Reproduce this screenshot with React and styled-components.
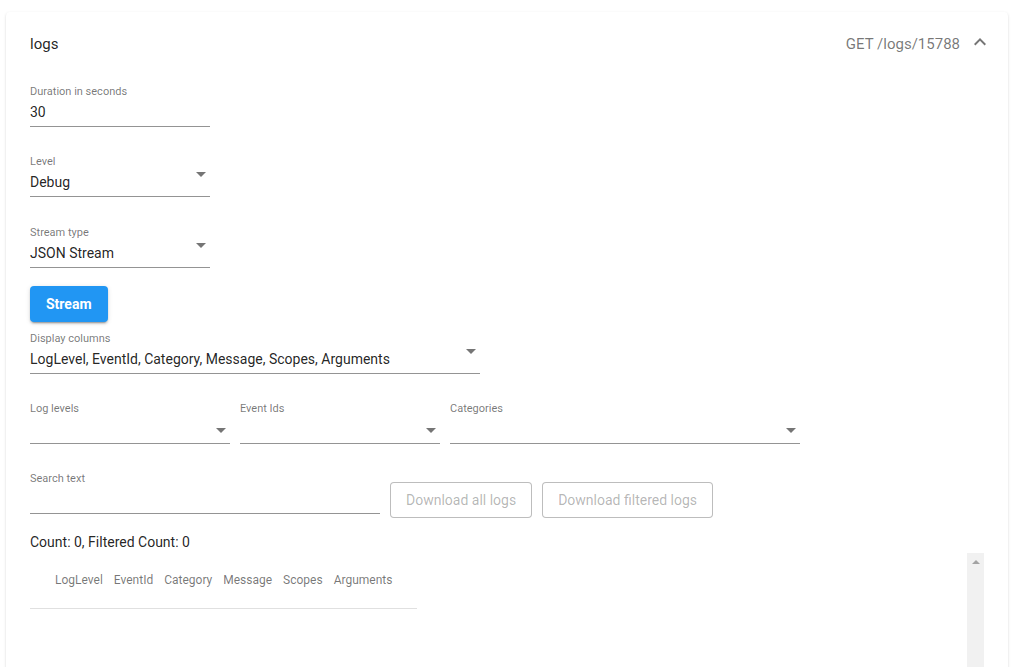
import React from "react";
import styled, { createGlobalStyle } from "styled-components";

const Global = createGlobalStyle`
  html, body { margin: 0; padding: 0; background: #fff; overflow: hidden; }
  body { font-family: Roboto, "Liberation Sans", Arial, sans-serif; color: rgba(0,0,0,0.87); }
  * { box-sizing: border-box; }
`;

const Page = styled.div`
  padding: 12px 5px 0 6px;
  height: 667px;
`;

const Card = styled.section`
  background: #fff;
  border-radius: 4px;
  box-shadow: 0 2px 1px -1px rgba(0,0,0,0.2), 0 1px 1px 0 rgba(0,0,0,0.14), 0 1px 3px 0 rgba(0,0,0,0.12);
  height: 700px;
`;

const Summary = styled.header`
  height: 64px;
  display: flex;
  align-items: center;
  padding: 0 16px 0 24px;
`;

const Title = styled.div`
  flex: 1;
  font-size: 15px;
  color: rgba(0,0,0,0.87);
`;

const Route = styled.div`
  font-size: 15px;
  color: rgba(0,0,0,0.54);
  margin-right: 8px;
`;

const ChevronBox = styled.svg`
  width: 24px;
  height: 24px;
  fill: rgba(0,0,0,0.54);
  margin-top: -4px;
`;

const Details = styled.div`
  padding: 8px 24px 0 24px;
  display: flex;
  flex-direction: column;
  align-items: flex-start;
`;

const Field = styled.div`
  position: relative;
  width: ${(p) => p.$w}px;
  margin-top: ${(p) => p.$mt ?? 0}px;
  display: flex;
  flex-direction: column;
`;

const Label = styled.div`
  font-size: 11px;
  line-height: 14px;
  padding-top: 1px;
  height: 15px;
  color: rgba(0,0,0,0.54);
  white-space: nowrap;
`;

const Value = styled.div`
  margin-top: 3px;
  font-size: 14px;
  line-height: 19px;
  height: 25px;
  padding-top: 1px;
  padding-bottom: 4px;
  border-bottom: 1px solid rgba(0,0,0,0.42);
  color: rgba(0,0,0,0.87);
  white-space: nowrap;
`;

const Arrow = styled.svg`
  position: absolute;
  right: 4px;
  bottom: ${(p) => p.$bottom}px;
  width: 10px;
  height: 5px;
  fill: rgba(0,0,0,0.54);
`;

const PrimaryButton = styled.button`
  margin-top: 18px;
  height: 36px;
  padding: 6px 16px;
  border: none;
  border-radius: 4px;
  background: #2196f3;
  color: #fff;
  font-family: inherit;
  font-size: 14px;
  font-weight: 700;
  line-height: 24px;
  box-shadow: 0 3px 1px -2px rgba(0,0,0,0.2), 0 2px 2px 0 rgba(0,0,0,0.14), 0 1px 5px 0 rgba(0,0,0,0.12);
`;

const Row = styled.div`
  display: flex;
  gap: 10px;
  margin-top: ${(p) => p.$mt ?? 27}px;
  align-items: flex-start;
`;

const OutlinedButton = styled.button`
  margin-top: 11px;
  height: 36px;
  padding: 5px 15px;
  border: 1px solid rgba(0,0,0,0.26);
  border-radius: 4px;
  background: #fff;
  color: rgba(0,0,0,0.3);
  font-family: inherit;
  font-size: 14px;
  line-height: 24px;
  white-space: nowrap;
`;

const Count = styled.div`
  margin-top: 15px;
  font-size: 14px;
  line-height: 19px;
  color: rgba(0,0,0,0.87);
`;

const Scroller = styled.div`
  align-self: stretch;
  height: 200px;
  margin-top: 1px;
  display: flex;
`;

const TableArea = styled.div`
  flex: 1;
  min-width: 0;
`;

const ScrollTrack = styled.div`
  width: 17px;
  background: #f1f1f1;
  display: flex;
  justify-content: center;
  padding-top: 7px;
`;

const TrackArrow = styled.svg`
  width: 8px;
  height: 4px;
  fill: #a3a3a3;
`;

const Table = styled.table`
  border-collapse: collapse;
`;

const HeadCell = styled.th`
  padding: 15px 5.5px 16px;
  font-size: 12px;
  line-height: 24px;
  font-weight: 400;
  color: rgba(0,0,0,0.54);
  text-align: left;
  white-space: nowrap;
  border-bottom: 1px solid #e0e0e0;
  &:first-child { padding-left: 25px; }
  &:last-child { padding-right: 25px; }
`;

const Caret = ({ bottom }) => (
  <Arrow $bottom={bottom} viewBox="0 0 10 5">
    <path d="M0 0l5 5 5-5z" />
  </Arrow>
);

const SelectField = ({ label, value, width, mt, filter }) => (
  <Field $w={width} $mt={mt}>
    <Label>{label}</Label>
    <Value>{value}</Value>
    <Caret bottom={filter ? 11 : 20} />
  </Field>
);

const columns = ["LogLevel", "EventId", "Category", "Message", "Scopes", "Arguments"];

export default function App() {
  return (
    <>
      <Global />
      <Page>
        <Card>
          <Summary>
            <Title>logs</Title>
            <Route>GET /logs/15788</Route>
            <ChevronBox viewBox="0 0 24 24">
              <path d="M7.41 15.41 12 10.83l4.59 4.58L18 14l-6-6-6 6z" />
            </ChevronBox>
          </Summary>
          <Details>
            <Field $w={180}>
              <Label>Duration in seconds</Label>
              <Value>30</Value>
            </Field>
            <SelectField label="Level" value="Debug" width={180} mt={27} />
            <SelectField label="Stream type" value="JSON Stream" width={180} mt={28} />
            <PrimaryButton>Stream</PrimaryButton>
            <SelectField
              label="Display columns"
              value="LogLevel, EventId, Category, Message, Scopes, Arguments"
              width={450}
              mt={9}
            />
            <Row>
              <SelectField label="Log levels" value="" width={200} filter />
              <SelectField label="Event Ids" value="" width={200} filter />
              <SelectField label="Categories" value="" width={350} filter />
            </Row>
            <Row>
              <Field $w={350}>
                <Label>Search text</Label>
                <Value />
              </Field>
              <OutlinedButton disabled>Download all logs</OutlinedButton>
              <OutlinedButton disabled>Download filtered logs</OutlinedButton>
            </Row>
            <Count>Count: 0, Filtered Count: 0</Count>
            <Scroller>
              <TableArea>
                <Table>
                  <thead>
                    <tr>
                      {columns.map((c) => (
                        <HeadCell key={c}>{c}</HeadCell>
                      ))}
                    </tr>
                  </thead>
                </Table>
              </TableArea>
              <ScrollTrack>
                <TrackArrow viewBox="0 0 8 4">
                  <path d="M0 4l4-4 4 4z" />
                </TrackArrow>
              </ScrollTrack>
            </Scroller>
          </Details>
        </Card>
      </Page>
    </>
  );
}
